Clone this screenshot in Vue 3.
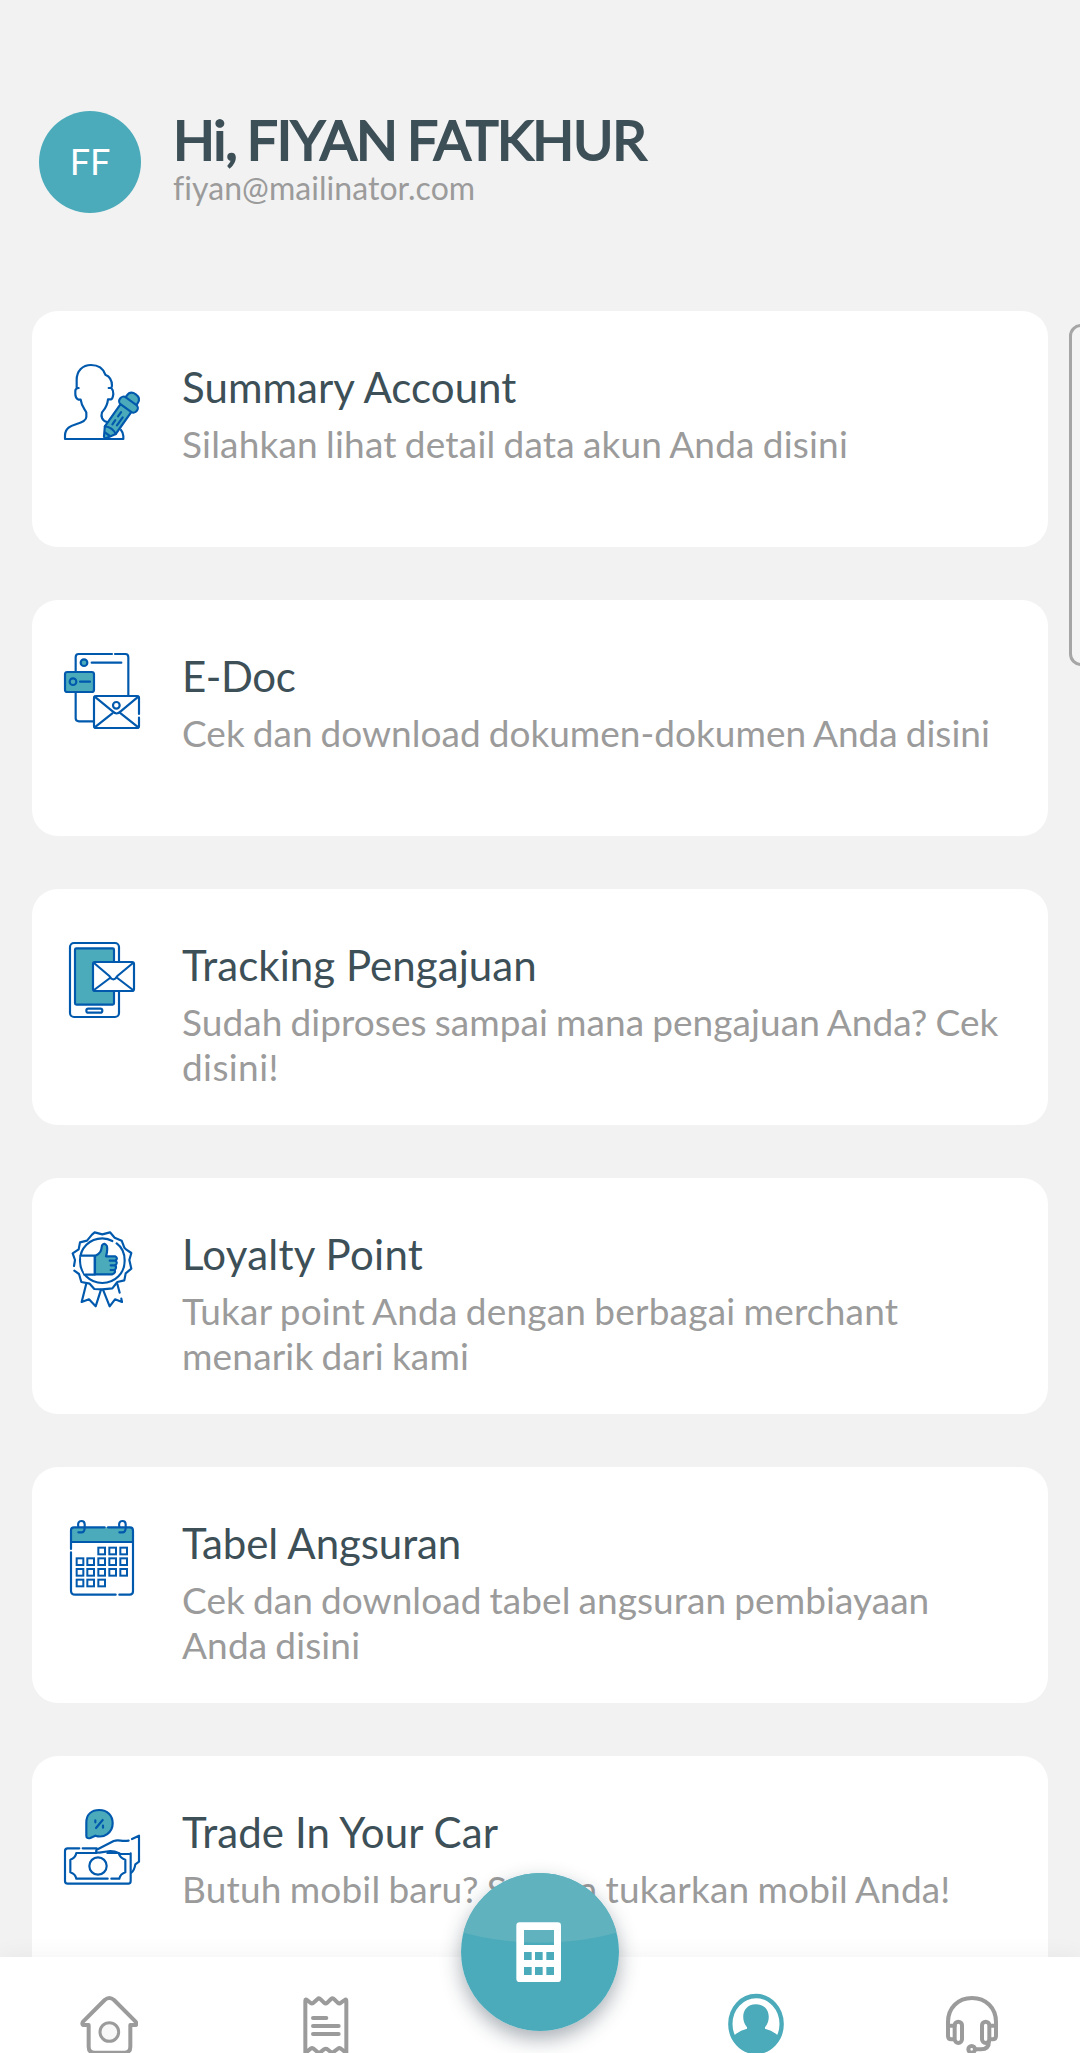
<script setup>
const menu = [
  {
    icon: 'account',
    title: { text: 'Summary Account', tracking: 0.05 },
    lines: [{ text: 'Silahkan lihat detail data akun Anda disini', tracking: 0.19 }],
  },
  {
    icon: 'doc',
    title: { text: 'E-Doc', tracking: -0.4 },
    lines: [{ text: 'Cek dan download dokumen-dokumen Anda disini', tracking: 0.02 }],
  },
  {
    icon: 'tracking',
    title: { text: 'Tracking Pengajuan', tracking: 0.05 },
    lines: [
      { text: 'Sudah diproses sampai mana pengajuan Anda? Cek', tracking: 0.07 },
      { text: 'disini!', tracking: 0.4 },
    ],
  },
  {
    icon: 'loyalty',
    title: { text: 'Loyalty Point', tracking: 0.25 },
    lines: [
      { text: 'Tukar point Anda dengan berbagai merchant', tracking: 0.21 },
      { text: 'menarik dari kami', tracking: 0.18 },
    ],
  },
  {
    icon: 'calendar',
    title: { text: 'Tabel Angsuran', tracking: -0.08 },
    lines: [
      { text: 'Cek dan download tabel angsuran pembiayaan', tracking: 0.07 },
      { text: 'Anda disini', tracking: 0.13 },
    ],
  },
  {
    icon: 'trade',
    title: { text: 'Trade In Your Car', tracking: 0.08 },
    lines: [{ text: 'Butuh mobil baru? Segera tukarkan mobil Anda!', tracking: 0.17 }],
  },
]
const viewBoxes = {
  account: '42 42 228 228',
  doc: '42 39 228 228',
  tracking: '42 36 228 228',
  loyalty: '42 33 228 228',
  calendar: '42 30 228 228',
  trade: '42 27 228 228',
}
const days = [
  [155, 123], [188, 123], [221, 123],
  [90, 155], [122, 155], [155, 155], [188, 155], [221, 155],
  [90, 187], [122, 187], [155, 187], [188, 187], [221, 187],
  [90, 219], [122, 219], [155, 219],
]
</script>

<template>
  <div class="screen">
    <header class="profile">
      <div class="avatar">FF</div>
      <div class="who">
        <h1>Hi, FIYAN FATKHUR</h1>
        <p>fiyan@mailinator.com</p>
      </div>
    </header>

    <main class="menu">
      <section v-for="m in menu" :key="m.icon" class="card">
        <svg class="icon" :viewBox="viewBoxes[m.icon]">
          <template v-if="m.icon === 'account'">
            <path d="M45 267H220V258Q219 247 213 240M45 267V256C46 234 62 228 78 223C98 217 109 211 109 201V188C106 178 95 172 92 149H85Q76 144 76 133V122Q76 115 86 114H80V90C80 62 98 45 123 45C145 45 160 56 166 74C181 80 186 91 186 107L184 114H176H184Q190 120 190 132Q188 147 183 148H174C172 170 164 177 156 187C152 199 156 213 171 216" />
            <g class="teal" transform="translate(164 264) rotate(35.5)">
              <path d="M-20 -112V-29L-4 -2Q0 2 4 -2L20 -29V-112Z" />
              <path d="M-20 -128V-142Q-20 -161 0 -161Q20 -161 20 -142V-128Z" />
              <rect x="-31" y="-136" width="62" height="26" rx="12" />
              <path d="M-20 -29Q0 -40 20 -29M-8 -14H8M-5 -92V-76M-5 -62V-47M8 -82V-52" />
            </g>
          </template>
          <template v-else-if="m.icon === 'doc'">
            <path d="M186 42H86Q77 42 77 52V235Q77 244 87 244H131M195 42H226Q235 42 235 52V166M125 68H214" />
            <rect class="teal" x="45" y="96" width="87" height="60" rx="7" />
            <circle class="teal" cx="102" cy="68" r="10" />
            <circle class="teal" cx="69" cy="125" r="10" />
            <path d="M90 125H120" />
            <path class="white" d="M267 222V174Q267 168 261 168H138Q132 168 132 174V258Q132 264 138 264H261Q267 264 267 258V233" />
            <path d="M134 170L188 214Q200 227 212 214L265 170M134 262L187 220M265 262L212 220" />
            <circle cx="199" cy="196" r="10" />
          </template>
          <template v-else-if="m.icon === 'tracking'">
            <rect x="60" y="39" width="147" height="222" rx="12" />
            <rect class="teal" x="75" y="55" width="117" height="169" rx="4" />
            <rect x="109" y="236" width="48" height="12" rx="6" />
            <rect class="white" x="129" y="96" width="123" height="87" rx="6" />
            <path d="M132 99L178 138Q190 158 202 138L249 99M132 180L180 144M249 180L202 144" />
          </template>
          <template v-else-if="m.icon === 'loyalty'">
            <path d="M72 138L75 120L68 100L86 88L90 67L111 62L126 44L134 37L157 43L180 37L194 53L215 62L223 83L228 88L244 99L238 120L244 146L227 160L223 181L202 186L187 205L157 208L133 207L119 191L94 186L87 162L73 152" />
            <path d="M200 70C214 80 224 98 224 122C224 160 195 189 157 189C119 189 90 160 90 122C90 84 119 55 157 55Q174 55 187 63" />
            <path class="teal" d="M135 108C152 100 154 92 156 76Q164 66 171 79C173 90 171 99 168 109H195Q205 114 197 122Q204 129 196 136Q201 143 194 150Q198 159 187 163H135Z" />
            <path class="white" d="M92 107H134V164H103" />
            <path d="M179 122H197M182 136H196M182 150H194M108 194L95 246L117 238L137 259L153 209M159 209L179 259L195 238L216 246L214 236M202 192L209 218" />
          </template>
          <template v-else-if="m.icon === 'calendar'">
            <path class="fill" d="M63 96V60Q63 52 72 52H240Q249 52 249 60V96Z" />
            <path d="M63 117V61Q63 52 72 52H164M174 52H240Q249 52 249 62V244Q249 254 239 254H208M197 254H76Q63 254 63 242V127M63 96H249" />
            <path d="M85 51Q82 33 94 33Q104 33 104 43V53Q104 67 94 67H85M208 51Q205 33 217 33Q227 33 227 43V53Q227 67 217 67H208" />
            <rect v-for="([x, y], i) in days" :key="i" class="day" :x="x - 10" :y="y - 10" width="20" height="20" />
          </template>
          <template v-else>
            <path class="teal" d="M109 68C109 43 125 30 148 30C172 30 188 47 188 70C188 98 162 116 136 107L121 114Q109 117 109 107Z" />
            <path d="M158 60L138 84M136 61V67M159 77V83" />
            <path d="M88 145H53Q45 145 45 153V243Q45 251 53 251H235Q242 251 242 243V160M98 145H140M173 236H79Q76 222 61 217V179Q76 174 79 159H140M172 159H206Q210 174 226 179V217Q211 222 208 236H184" />
            <circle cx="144" cy="198" r="26" />
            <path d="M236 122C213 125 207 118 191 123L140 149Q134 158 148 158L181 153C205 153 204 162 214 162H238M246 117L267 107V185L256 193Q253 211 244 218" />
          </template>
        </svg>
        <div class="copy">
          <h2 :style="{ letterSpacing: m.title.tracking + 'px' }">{{ m.title.text }}</h2>
          <p>
            <span v-for="l in m.lines" :key="l.text" :style="{ letterSpacing: l.tracking + 'px' }">{{ l.text }}</span>
          </p>
        </div>
      </section>
    </main>

    <div class="edge-panel"></div>

    <nav class="tabs">
      <a class="tab">
        <svg viewBox="54 159 180 180">
          <path d="M69 255Q65 250 70 244L134 180Q148 168 162 180L226 244Q231 250 228 255H211V320Q211 338 193 338H104Q86 338 86 320V255Z" />
          <circle class="hole" cx="148" cy="276" r="28" />
        </svg>
      </a>
      <a class="tab">
        <svg viewBox="702 159 180 180">
          <path d="M736 345V182Q736 176 742 181L752 189Q757 192 762 187L773 177Q777 173 782 178L792 188Q797 192 802 188L813 177Q818 173 823 178L833 188Q838 192 843 188L854 180Q859 176 859 183V345M736 339L752 326Q757 322 762 327L776 339M776 341L792 328Q798 324 804 329L816 339L834 326Q839 322 844 327L859 339" />
          <path d="M759 234H799M759 258H836M759 282H836" />
        </svg>
      </a>
      <span class="tab"></span>
      <a class="tab">
        <svg viewBox="78 159 180 180">
          <ellipse class="ring" cx="168" cy="252" rx="77" ry="84" />
          <path class="person" d="M100 289Q117 271 141 266V262C121 240 126 193 168 193C210 193 215 240 195 262V266Q219 271 236 289C226 320 199 340 168 340C137 340 110 320 100 289Z" />
        </svg>
      </a>
      <a class="tab">
        <svg viewBox="726 159 180 180">
          <path d="M744 255V246C744 204 774 174 816 174C858 174 888 204 888 246V288Q888 298 878 298H872M744 250V288Q744 298 754 298H762M744 257H764M870 257H888" />
          <rect x="764" y="245" width="22" height="64" rx="11" />
          <rect x="846" y="245" width="22" height="64" rx="11" />
          <circle cx="815" cy="328" r="10" />
          <path d="M826 328H843Q867 328 867 304" />
        </svg>
      </a>
    </nav>

    <button class="fab" aria-label="Kalkulator">
      <svg viewBox="63 69 474 474">
        <defs><clipPath id="disc"><circle cx="300" cy="306" r="237" /></clipPath></defs>
        <circle cx="300" cy="306" r="237" fill="#4babba" />
        <circle cx="300" cy="-622" r="900" fill="#60b2be" clip-path="url(#disc)" />
        <path fill="#fff" fill-rule="evenodd" d="M239 217H353Q363 217 363 227V386Q363 396 353 396H239Q229 396 229 386V227Q229 217 239 217ZM252 240V285H342V240ZM252 306V330H275V306ZM285 306V330H308V306ZM319 306V330H342V306ZM252 351V375H275V351ZM285 351V375H308V351ZM319 351V375H342V351Z" />
      </svg>
    </button>
  </div>
</template>

<style>
body { margin: 0; overflow: hidden; }
</style>

<style scoped>
.screen {
  position: relative;
  width: 1080px;
  height: 2053px;
  overflow: hidden;
  box-sizing: border-box;
  background: #f2f2f2;
  font-family: Lato, "Open Sans", sans-serif;
  color: #3d4f57;
}
h1, h2, p { margin: 0; font-weight: 400; }
.profile {
  display: flex;
  gap: 32px;
  height: 200px;
  padding: 111px 39px 0;
}
.avatar {
  display: flex;
  align-items: center;
  justify-content: center;
  width: 102px;
  height: 102px;
  padding-bottom: 2px;
  box-sizing: border-box;
  border-radius: 50%;
  background: #4babba;
  color: #fff;
  font-size: 36px;
}
.who { white-space: nowrap; }
.who h1 {
  margin-top: -2px;
  font-size: 55px;
  line-height: 60px;
  letter-spacing: -1.25px;
  word-spacing: -2.5px;
  -webkit-text-stroke: 1.9px #3d4f57;
}
.who p { margin-top: 1px; font-size: 32px; line-height: 36px; letter-spacing: 0.05px; color: #9b9b9b; }
.menu {
  display: flex;
  flex-direction: column;
  gap: 53px;
  padding: 0 32px;
}
.card {
  display: flex;
  flex: none;
  gap: 42px;
  height: 236px;
  padding: 53px 32px 0;
  box-sizing: border-box;
  border-radius: 26px;
  background: #fff;
}
.icon {
  flex: none;
  width: 76px;
  height: 76px;
  overflow: visible;
  fill: none;
  stroke: #0059ad;
  stroke-width: 6.5;
  stroke-linecap: round;
  stroke-linejoin: round;
}
.teal { fill: #4babba; }
.white { fill: #fff; }
.fill { fill: #4babba; stroke: none; }
.day { stroke-width: 6; stroke-linejoin: miter; }
.copy { white-space: nowrap; }
.copy h2 { margin-top: -2px; font-size: 42px; line-height: 50px; }
.copy p { margin-top: 9px; font-size: 37px; line-height: 45px; word-spacing: -1.5px; color: #9b9b9b; }
.copy span { display: block; }
.edge-panel {
  position: absolute;
  left: 1069px;
  top: 324px;
  width: 30px;
  height: 342px;
  box-sizing: border-box;
  border: 3px solid #a6a6a6;
  border-radius: 12px;
  background: #f4f4f4;
}
.tabs {
  position: absolute;
  left: 0;
  right: 0;
  bottom: 0;
  display: flex;
  height: 96px;
  background: #fff;
  box-shadow: 0 0 24px rgba(0, 0, 0, 0.055);
}
.tab {
  display: flex;
  flex: 1;
  justify-content: center;
  padding-top: 36px;
}
.tab svg {
  width: 60px;
  height: 60px;
  fill: none;
  stroke: #9b9b9b;
  stroke-width: 12;
  stroke-linecap: round;
  stroke-linejoin: round;
}
.tab .hole { fill: #f8f8f8; stroke-width: 9; }
.tab .ring { stroke: #4babba; stroke-width: 13; }
.tab .person { fill: #4babba; stroke: none; }
.fab {
  position: absolute;
  left: 461px;
  top: 1873px;
  width: 158px;
  height: 158px;
  padding: 0;
  border: 0;
  border-radius: 50%;
  background: none;
  box-shadow: 0 8px 20px rgba(30, 45, 60, 0.38);
}
.fab svg { display: block; width: 158px; height: 158px; }
</style>
